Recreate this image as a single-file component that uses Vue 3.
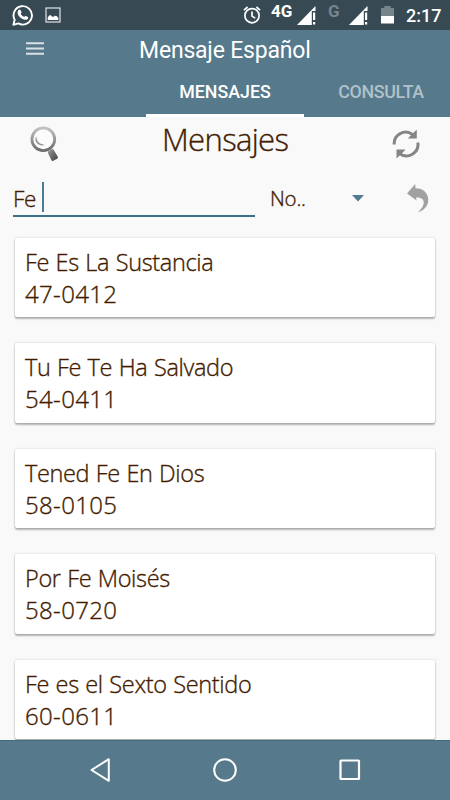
<script setup>
const messages = [
  { title: 'Fe Es La Sustancia', code: '47-0412' },
  { title: 'Tu Fe Te Ha Salvado', code: '54-0411' },
  { title: 'Tened Fe En Dios', code: '58-0105' },
  { title: 'Por Fe Moisés', code: '58-0720' },
  { title: 'Fe es el Sexto Sentido', code: '60-0611' },
]
</script>

<template>
  <div class="phone">
    <div class="status">
      <svg class="s-wa" width="22" height="22" viewBox="0 0 22 22">
        <path d="M1.4 20.8 2.7 15.8A9.2 9.2 0 1 1 6.3 19.4Z" fill="none" stroke="#fff" stroke-width="1.9" stroke-linejoin="round" />
        <path d="M6.500 6c.6-.7 1.600-.7 2 .1l1 2c.2.6-.2 1-.8 1.700.8 1.500 2 2.500 3.500 3.200.7-.7 1-1.400 1.700-1l2 1.100c.6.4.4 1.300-.2 1.900-1.400 1.400-3.600 1-6-.4-2.300-1.400-3.900-3.600-4.100-5.600 0-1.200.2-2.200.9-3z" fill="#fff" />
      </svg>
      <svg class="s-img" width="16" height="16" viewBox="0 0 16 16">
        <rect x="1" y="1" width="14" height="14" fill="none" stroke="#dfe4e6" stroke-width="1.200" />
        <path d="M2.700 13V10.500L4 8.800l1.200-.8 1.600 1.200L8 10l1.800-1.300 1.700.3 1.800 1.700V13z" fill="#fff" />
      </svg>
      <span class="gap"></span>
      <svg class="s-alarm" width="18" height="20" viewBox="0 0 18 20">
        <circle cx="9" cy="10.700" r="7.100" fill="none" stroke="#fff" stroke-width="1.700" />
        <path d="M1 5.200 4.600 2M17 5.200 13.400 2M9 6.500v4.600l3.200 2" fill="none" stroke="#fff" stroke-width="1.700" />
      </svg>
      <span class="net">4G</span>
      <svg class="s-sig1" width="19" height="19" viewBox="0 0 19 19">
        <path d="M18.500 0v5H14.800v14H0z" fill="#fff" /><path d="M16 6.500h2.200v7.500H16zM16 16h2.200v2.500H16z" fill="#fff" />
      </svg>
      <span class="net dim">G</span>
      <svg class="s-sig2" width="19" height="19" viewBox="0 0 19 19">
        <path d="M18.500 0v5H14.800v14H0z" fill="#fff" /><path d="M16 6.500h2.200v7.500H16zM16 16h2.200v2.500H16z" fill="#fff" />
      </svg>
      <svg class="s-bat" width="13" height="18" viewBox="0 0 12 18" preserveAspectRatio="none">
        <path d="M3 0h6v2h3v8H0V2h3z" fill="#76848c" /><path d="M0 10h12v7.500H0z" fill="#fff" />
      </svg>
      <span class="clock">2:17</span>
    </div>

    <header class="bar">
      <svg class="burger" width="18" height="13" viewBox="0 0 18 13">
        <path d="M0 1.300h18M0 6.500h18M0 11.700h18" stroke="#d9e1e6" stroke-width="2.100" />
      </svg>
      <h1>Mensaje Español</h1>
    </header>
    <nav class="tabs">
      <div class="tab active"><span>MENSAJES</span></div>
      <div class="tab"><span>CONSULTA</span></div>
    </nav>

    <main class="content">
      <div class="heading">
        <svg class="search" width="30" height="37" viewBox="0 0 30 37">
          <defs>
            <linearGradient id="rim" x1="0" y1="0" x2="0" y2="1"><stop offset="0" stop-color="#c2c2c2" /><stop offset="1" stop-color="#6b6b6b" /></linearGradient>
            <linearGradient id="grip" x1="0" y1="0" x2="1" y2="1"><stop offset="0" stop-color="#8b8b8b" /><stop offset="1" stop-color="#4c4c4c" /></linearGradient>
          </defs>
          <circle cx="14.300" cy="14.300" r="11.400" fill="#fbfbfb" stroke="url(#rim)" stroke-width="2.800" />
          <path d="M7.300 11.500c.3 5.200 3.300 7.800 8.500 8.300-3 2-8.800-.5-9.300-4.800-.2-1.400.1-2.600.8-3.500z" fill="#929292" />
          <path d="m20.500 27.500 2.900-1.700 3.900 6.600-3.600 1.900z" fill="url(#grip)" stroke="url(#grip)" stroke-width="3.200" stroke-linejoin="round" />
        </svg>
        <h2>Mensajes</h2>
        <svg class="sync" width="28" height="30" viewBox="0 0 28 30">
          <g fill="none" stroke="#858585" stroke-width="3"><path d="M2.200 15.500A11.500 11.500 0 0 1 20.500 5.500" /><path d="M25.800 13.500A11.500 11.500 0 0 1 7.500 24.500" /></g>
          <path d="M24.800 0.500V9.500H15.800L19.200 6zM4.500 29.500V20.500H13.500L10 24.200z" fill="#858585" />
        </svg>
      </div>
      <div class="filters">
        <div class="input"><span>Fe</span><i></i></div>
        <span class="select">No..</span>
        <svg class="caret" width="12" height="7" viewBox="0 0 12 7"><path d="M0 0h12L6 6.600z" fill="#4f7a90" /></svg>
        <svg class="undo" width="22" height="29" viewBox="0 0 22 29">
          <path d="M0 9.500 8.200 0l.3 4.300C16 4.300 21.300 9 21.300 16c0 5.500-4.300 10.700-10.300 12.300 3.800-3.600 6.200-7 5.600-11-.5-2.800-3.600-4-7.600-3.700l.6 3z" fill="#a1a1a1" />
        </svg>
      </div>
      <div class="list">
        <article v-for="m in messages" :key="m.code" class="card">
          <p class="title">{{ m.title }}</p>
          <p class="code">{{ m.code }}</p>
        </article>
      </div>
    </main>

    <footer class="nav">
      <svg width="20" height="24" viewBox="0 0 20 24"><path d="M18.800 1.200v21.600L1.500 12z" fill="none" stroke="#fff" stroke-width="2" stroke-linejoin="round" /></svg>
      <svg width="24" height="24" viewBox="0 0 24 24"><circle cx="12" cy="12" r="10.800" fill="none" stroke="#fff" stroke-width="2" /></svg>
      <svg width="22" height="22" viewBox="0 0 22 22"><rect x="1.500" y="1.500" width="18.500" height="18.500" rx="0.500" fill="none" stroke="#fff" stroke-width="2.200" /></svg>
    </footer>
  </div>
</template>

<style>
body { margin: 0; }
</style>

<style scoped>
.phone { width: 450px; height: 800px; display: flex; flex-direction: column; overflow: hidden; background: #f9f9f9; font-family: Roboto, sans-serif; }
.status { height: 30px; flex: none; background: #374a54; display: flex; align-items: flex-start; color: #fff; box-sizing: border-box; padding-right: 9px; }
.status svg { flex: none; }
.s-wa { margin: 4px 0 0 12px; }
.s-img { margin: 7px 0 0 11px; }
.gap { flex: 1; }
.s-alarm { margin: 5px 10px 0 0; }
.net { font-size: 17px; line-height: 20px; font-weight: 700; margin-top: 1px; width: 26px; }
.net.dim { color: #76848c; width: 21px; margin-left: 12px; }
.s-sig1, .s-sig2 { margin-top: 6px; }
.s-bat { margin: 6px 12px 0 13px; }
.clock { font-size: 18px; line-height: 22px; margin-top: 5px; font-weight: 500; width: 35px; white-space: nowrap; }
.bar { height: 38px; flex: none; background: #56798b; display: flex; align-items: flex-start; }
.burger { margin: 12px 0 0 26px; }
h1 { margin: 7px 0 0 95px; font-size: 23px; line-height: 27px; font-weight: 400; color: #fff; white-space: nowrap; letter-spacing: -0.200px; }
.tabs { height: 49px; flex: none; background: #56798b; display: flex; padding-left: 146px; }
.tab { box-sizing: border-box; flex: none; width: 158px; height: 49px; padding-top: 13px; text-align: center; font-size: 17.800px; line-height: 22px; font-weight: 500; color: #b1c1c9; border-bottom: 3px solid transparent; }
.tab:not(.active) { width: 154px; letter-spacing: -0.300px; }
.tab.active { color: #fff; border-bottom-color: #fff; }
.content { height: 623px; flex: none; overflow: hidden; color: #431c00; font-family: "Open Sans", sans-serif; font-weight: 300; -webkit-text-stroke: 0.350px #431c00; }
.heading { height: 56px; display: flex; align-items: flex-start; }
.search { margin: 8px 0 0 29px; }
h2 { margin: 1px 0 0 103px; width: 126px; font-size: 31px; line-height: 42px; font-weight: 300; white-space: nowrap; letter-spacing: -0.650px; }
.sync { margin: 12px 0 0 104px; }
.filters { height: 64px; display: flex; align-items: flex-start; }
.input { width: 242px; height: 44px; margin-left: 13px; box-sizing: border-box; border-bottom: 2px solid #3b6e87; display: flex; font-size: 22.500px; line-height: 51px; letter-spacing: -0.300px; }
.input span { width: 23px; }
.input i { width: 2px; height: 30px; background: #4c7b93; margin: 9px 0 0 5.500px; }
.select { margin: 11px 0 0 15px; width: 82px; font-size: 20.500px; line-height: 28px; letter-spacing: -0.200px; }
.caret { margin: 22px 0 0; }
.undo { margin: 11px 0 0 43px; }
.list { display: flex; flex-direction: column; gap: 26px; padding: 0.500px 15px 0; }
.card { height: 79.600px; box-sizing: border-box; padding: 8px 0 0 10px; background: #fff; border-radius: 2px; box-shadow: 0 2px 2px rgba(0, 0, 0, 0.28), 0 0 2px rgba(0, 0, 0, 0.22); flex: none; }
.card p { margin: 0; line-height: 32px; white-space: nowrap; }
.title { font-size: 23.500px; letter-spacing: -0.350px; word-spacing: 0.800px; }
.code { font-size: 24px; letter-spacing: 0.350px; }
.nav { height: 60px; flex: none; box-sizing: border-box; background: #56798b; border-top: 1px solid #3e6c82; display: flex; align-items: center; justify-content: space-between; padding: 0 89px 1px 90px; }
</style>
